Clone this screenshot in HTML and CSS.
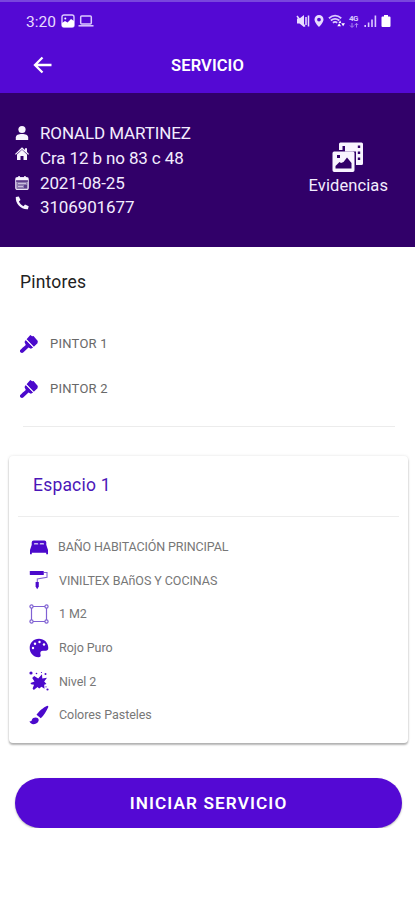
FILE: index.html
```html
<!DOCTYPE html>
<html lang="es">
<head>
    <meta charset="UTF-8">
    <meta name="viewport" content="width=device-width, initial-scale=1.0">
    <title>Servicio</title>
    <link rel="stylesheet" href="styles.css">
</head>
<body>
    <header class="top">
        <div class="status-bar">
            <span class="time">3:20</span>
            <svg class="st-image" width="14" height="14" viewBox="0 0 14 14"><rect x="1" y="1" width="12" height="12" rx="2" fill="none" stroke="#dccbff" stroke-width="1.4"/><circle cx="4.3" cy="4.5" r="1" fill="#fff"/><path d="M1 9l3-2 2.500 1.500L10 5l3 2v5l-1 1H2l-1-1z" fill="#fff"/></svg>
            <svg class="st-laptop" width="16" height="14" viewBox="0 0 16 14"><rect x="2.700" y="2" width="10.600" height="8" rx="1" fill="none" stroke="#dccbff" stroke-width="1.500"/><path d="M.5 11.800h15" stroke="#dccbff" stroke-width="1.500"/></svg>
            <div class="status-icons">
                <svg width="14" height="14" viewBox="0 0 14 14"><path d="M1 4.500h2.500L8 1v12L3.500 9.500H1z" fill="#e8dcff"/><path d="M1 2l8 10.500M10 3v8M12.500 1.500v11" stroke="#e8dcff" stroke-width="1.500" fill="none"/></svg>
                <svg width="10" height="14" viewBox="0 0 10 14"><path fill-rule="evenodd" d="M5 1a4.500 4.500 0 0 0-4.500 4.500C.5 8.500 5 13 5 13s4.500-4.500 4.500-7.500A4.500 4.500 0 0 0 5 1zm0 2.700a1.900 1.900 0 1 1 0 3.800 1.900 1.900 0 0 1 0-3.800z" fill="#e8dcff"/></svg>
                <svg width="17" height="14" viewBox="0 0 18 14"><path d="M1 4c4-3.300 9-3.300 13 0M3 6.500c3-2.300 6-2.300 9 0M5.200 8.800c1.500-1.200 3-1.200 4.600 0" fill="none" stroke="#dccbff" stroke-width="2"/><path d="M9.800 12.500l2-3 2 3zM14 9.500h4l-2 3zM11 9l2-2.500 1 2.500z" fill="#fff"/></svg>
                <span class="net">4G<svg width="10" height="5" viewBox="0 0 10 5"><path d="M3 0v4M1 2.500L3 4.500l2-2M7.500 4.500V.5M5.800 2l1.700-1.700L9.200 2" fill="none" stroke="#a987f0"/></svg></span>
                <svg width="13" height="14" viewBox="0 0 13 14"><path d="M1.200 13v-2M4.600 13V8.500M8 13V5.500M11.400 13V1.500" stroke="#dccbff" stroke-width="1.600"/></svg>
                <svg width="10" height="14" viewBox="0 0 10 14"><path d="M3 1h4v1.500h1.500a1 1 0 0 1 1 1V12a1 1 0 0 1-1 1h-7a1 1 0 0 1-1-1V3.500a1 1 0 0 1 1-1H3z" fill="#fff"/></svg>
            </div>
        </div>
        <div class="app-bar">
            <svg class="back" width="20" height="18" viewBox="0 0 20 18"><path d="M9.500 1.500L2 9l7.500 7.500M2 9h16.500" fill="none" stroke="#fff" stroke-width="2.300"/></svg>
            <h1>SERVICIO</h1>
        </div>
    </header>

    <section class="client">
        <ul class="client-data">
            <li>
                <svg width="14" height="16" viewBox="0 0 14 16"><circle cx="7" cy="4.500" r="3.600"/><path d="M.8 15v-2.500C.8 10 3.500 9 7 9s6.200 1 6.200 3.500V15z"/></svg>
                <span>RONALD MARTINEZ</span>
            </li>
            <li class="raised">
                <svg width="14" height="14" viewBox="0 0 14 14"><path d="M7 .3L10 3V1.200h2V5l2 1.900-.8.900L7 2.300.8 7.800 0 6.900z"/><path d="M7 2.800l5 4.600V13H8.500V9h-3v4H2V7.400z"/></svg>
                <span>Cra 12 b no 83 c 48</span>
            </li>
            <li>
                <svg width="14" height="14" viewBox="0 0 14 14"><rect x=".8" y="1.500" width="12.400" height="12" rx="1.500" fill="#8c79ae" stroke="#e9e2f5" stroke-width="1.200"/><path d="M1 2h12v2.500H1zM3.300 0h1.500v3H3.300zM9.200 0h1.500v3H9.200z"/><path d="M1 5h12" stroke="#310069"/><path d="M3 7.500h8M3 10.500h5" stroke="#c9bddd"/><path d="M9 9h3v3H9z" fill="#5a3b8b"/></svg>
                <span>2021-08-25</span>
            </li>
            <li class="raised">
                <svg width="14" height="14" viewBox="0 0 14 14"><path d="M3.800.4L.8 1.100C.3 8 6 13.700 12.900 13.200l.8-3-3.700-1.700-1.500 1.700C6.200 9 5 7.700 3.900 5.500l1.600-1.400z"/></svg>
                <span>3106901677</span>
            </li>
        </ul>
        <div class="evidence">
            <svg width="32" height="31" viewBox="0 0 32 31"><path fill-rule="evenodd" d="M7 2a1.500 1.500 0 0 1 1.500-1.500h21A1.500 1.500 0 0 1 31 2v19.500a1.500 1.500 0 0 1-1.500 1.500H24V9.500H13V4h-2.500v4H7zm18.800 1.500V6h2.400V3.500zm0 6V12h2.400V9.500zm0 6V18h2.400v-2.500z"/><path fill-rule="evenodd" d="M2.200 9.500h18.600a1.700 1.700 0 0 1 1.700 1.700v17.100a1.700 1.700 0 0 1-1.700 1.700H2.200A1.700 1.700 0 0 1 .5 28.300V11.200a1.700 1.700 0 0 1 1.700-1.700zM5 13v3h3v-3zM3.500 26.500h16V21L15 15.500 11.500 20 9 21l-1.500-1-4 4z"/></svg>
            <span>Evidencias</span>
        </div>
    </section>

    <main>
        <section class="painters">
            <h2>Pintores</h2>
            <ul>
                <li>
                    <svg width="20" height="20" viewBox="0 0 20 20"><path d="M11.300 1l1.800 1.300L14.500 2l4.300 5-.3 2.200-3.700 3.600-7.200-7.600z"/><path d="M6.800 6l7.300 7.600-2.200 1.200-2.400-1.300-5.300 5C3 19.500.5 18.500 1 16.500c.3-1 4.500-4.300 5.800-5.500L5.500 8z"/><path d="M7.200 5.700l7.200 7.500" stroke="#fff" stroke-width=".8"/></svg>
                    <span>PINTOR 1</span>
                </li>
                <li>
                    <svg width="20" height="20" viewBox="0 0 20 20"><path d="M11.300 1l1.800 1.300L14.500 2l4.300 5-.3 2.200-3.700 3.600-7.200-7.600z"/><path d="M6.800 6l7.300 7.600-2.200 1.200-2.400-1.300-5.300 5C3 19.500.5 18.500 1 16.500c.3-1 4.500-4.300 5.800-5.500L5.500 8z"/><path d="M7.200 5.700l7.200 7.500" stroke="#fff" stroke-width=".8"/></svg>
                    <span>PINTOR 2</span>
                </li>
            </ul>
        </section>

        <section class="card">
            <h3>Espacio 1</h3>
            <ul>
                <li class="bed">
                    <svg width="20" height="20" viewBox="0 0 20 20"><path d="M2.700 9V5.500Q2.700 3.500 4.700 3.500h10.600q2 0 2 2V9z"/><path d="M2.500 8.500h15l1.500 4.500v4.200h-1.800v-1.400H2.800v1.400H1V13z"/><path d="M5 7.500V6.800q0-.8.800-.8h2.600q.8 0 .8.800v.7zM10.800 7.500V6.800q0-.8.800-.8h2.600q.8 0 .8.800v.7z" fill="#cbbdf0"/></svg>
                    <span>BAÑO HABITACIÓN PRINCIPAL</span>
                </li>
                <li>
                    <svg width="20" height="20" viewBox="0 0 20 20"><rect x=".8" y="1" width="14" height="4" rx=".6"/><path d="M15 2.500h3v4.700L8.300 9v3.500" fill="none" stroke="#8062d3" stroke-width="1.100"/><path d="M6.600 12h3.200v4.500l-1.600 2.700-1.600-2.700z"/></svg>
                    <span>VINILTEX BAñOS Y COCINAS</span>
                </li>
                <li>
                    <svg class="outline" width="20" height="20" viewBox="0 0 20 20"><path d="M4 2.500h12M4 17.500h12M2.500 4v12M17.500 4v12"/><circle cx="2.500" cy="2.500" r="1.600"/><circle cx="17.500" cy="2.500" r="1.600"/><circle cx="2.500" cy="17.500" r="1.600"/><circle cx="17.500" cy="17.500" r="1.600"/></svg>
                    <span>1 M2</span>
                </li>
                <li>
                    <svg width="20" height="20" viewBox="0 0 20 20"><path d="M10 .8C4.500.8.7 4.800.7 10c0 4.800 3.500 9 8.800 9.300 2 0 2.500-1.300 2-2.700-.7-2.500.3-3.900 2.500-3.900h2.800c1.500 0 2.500-1 2.500-2.700C19.300 4.700 15 .8 10 .8z"/><g fill="#fff"><circle cx="4" cy="10" r="1.200"/><circle cx="6" cy="5.800" r="1.200"/><circle cx="10.500" cy="4" r="1.200"/><circle cx="15" cy="6.500" r="1.200"/></g></svg>
                    <span>Rojo Puro</span>
                </li>
                <li>
                    <svg width="20" height="20" viewBox="0 0 20 20"><path d="M5.200 5l4 2.500L13 3.300l.3 4.200 4.700-.8-2.800 3.800 2.300 2.500-2.300.8.300 4-3-2-2.300 1.700-1.700-1.500-3.700 3-1.200-1.500 1.500-3.800-3-.5-.6-1.300 4-1.400-2.300-3.500z"/><circle cx="2" cy="2" r="1.600"/><circle cx="7.500" cy="2.500" r=".8"/><circle cx="12.500" cy="1.500" r=".6"/><circle cx="16.500" cy="3" r="1"/><circle cx="18.500" cy="18.500" r="1.100"/><circle cx="17" cy="15.800" r=".6"/></svg>
                    <span>Nivel 2</span>
                </li>
                <li>
                    <svg width="20" height="20" viewBox="0 0 20 20"><path d="M18.300.8c1 0 1.300.8.8 1.800-1.700 3.600-4.300 8-7.300 10.700L7.500 9.800C9.800 6.500 14.500 2.300 18.300.8z"/><path d="M6.500 12.500c2 0 3.500 1.200 3.200 3-.6 2.700-3.200 3.700-5.400 3.700-1.700 0-3.300-1.300-3.800-2.900 2 .2 2-.5 2.400-1.600.5-1.400 2-2.200 3.600-2.200z"/></svg>
                    <span>Colores Pasteles</span>
                </li>
            </ul>
        </section>

        <button class="start-btn">INICIAR SERVICIO</button>
    </main>
</body>
</html>
```

FILE: styles.css
```css
* {
    box-sizing: border-box;
}

body {
    font-family: Roboto, "Liberation Sans", sans-serif;
    margin: 0;
    background-color: #fff;
}

h1, h2, h3, ul {
    margin: 0;
    padding: 0;
    font-weight: 400;
}

ul {
    list-style: none;
}

svg {
    display: block;
    flex: none;
}

li {
    display: flex;
    align-items: center;
    white-space: nowrap;
}

/* Status bar and title */
.top {
    height: 93px;
    background-color: #5409d4;
    border-top: 2px solid #7946dd;
    color: #fff;
}

.status-bar {
    display: flex;
    align-items: center;
    height: 38px;
    padding: 0 24px 0 26px;
}

.time {
    width: 35px;
    padding-top: 1px;
    font-size: 15.5px;
    color: #e8dcff;
}

.st-laptop {
    margin-left: 3px;
}

.status-icons {
    display: flex;
    align-items: center;
    gap: 4px;
    margin-left: auto;
}

.net {
    width: 11px;
    font-size: 8px;
    font-weight: 700;
    line-height: 8px;
    letter-spacing: -0.5px;
    color: #dccbff;
}

.app-bar {
    display: grid;
    grid-template-columns: 51px 1fr 51px;
    align-items: center;
    height: 50px;
}

.back {
    margin-left: 33px;
}

h1 {
    text-align: center;
    font-size: 16.5px;
    font-weight: 600;
    letter-spacing: 0.1px;
}

/* Client data */
.client {
    display: flex;
    justify-content: space-between;
    height: 154px;
    padding: 28px 27px 0 15px;
    background-color: #310069;
    color: #f3edff;
    fill: #f8f4ff;
}

.client li {
    height: 24.7px;
    gap: 11px;
    font-size: 17px;
    letter-spacing: -0.12px;
}

.raised svg {
    margin-bottom: 8px;
}

.evidence {
    display: flex;
    flex-direction: column;
    align-items: center;
    padding-top: 21px;
    font-size: 16.5px;
    letter-spacing: 0.1px;
}

.evidence span {
    margin-top: 3px;
}

/* Painters */
.painters {
    height: 180px;
    margin: 0 20px 0 23px;
    border-bottom: 1px solid #ececec;
    fill: #4b09cc;
}

h2 {
    margin-left: -3px;
    padding-top: 24px;
    font-size: 17.5px;
    line-height: 22px;
    letter-spacing: 0.2px;
    color: #222;
}

.painters ul {
    margin: 28px 0 0 -4px;
}

.painters li {
    height: 45px;
    gap: 11px;
    font-size: 13px;
    letter-spacing: 0.25px;
    color: #686868;
}

/* Space detail */
.card {
    height: 287px;
    margin: 29px 7px 0 9px;
    border-radius: 4px;
    box-shadow: 0 2px 2px rgba(0, 0, 0, 0.28), 0 0 3px rgba(0, 0, 0, 0.12);
    fill: #4b09cc;
}

h3 {
    height: 61px;
    margin: 0 9px;
    padding-left: 15px;
    border-bottom: 1px solid #ededed;
    font-size: 17.5px;
    line-height: 59px;
    letter-spacing: 0.2px;
    color: #4b16b8;
}

.card ul {
    padding: 13px 0 0 20px;
}

.card li {
    height: 33.6px;
    gap: 10px;
    font-size: 12.5px;
    letter-spacing: -0.06px;
    color: #777;
}

.card .bed {
    gap: 9px;
    letter-spacing: -0.12px;
}

.outline {
    fill: none;
    stroke: #8062d3;
    stroke-width: 1.2;
}

.start-btn {
    display: block;
    width: 387px;
    height: 50px;
    margin: 35px 0 0 15px;
    padding: 0;
    border: none;
    border-radius: 25px;
    background-color: #5409d4;
    box-shadow: 0 1px 2px rgba(0, 0, 0, 0.3);
    color: #fff;
    font-family: inherit;
    font-size: 17.2px;
    font-weight: 600;
    letter-spacing: 1.1px;
}
```
